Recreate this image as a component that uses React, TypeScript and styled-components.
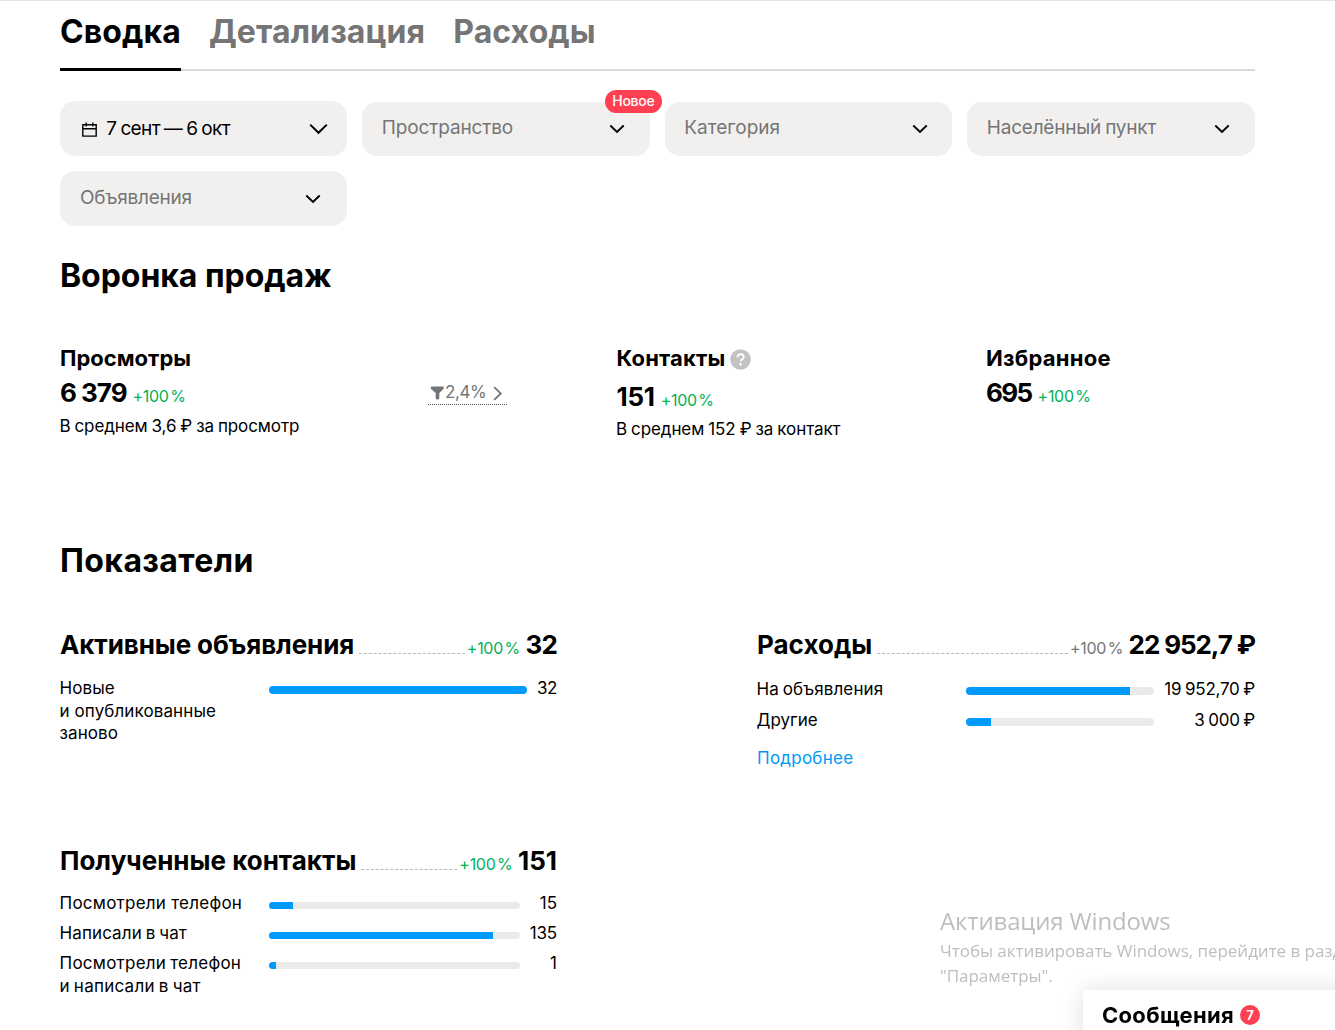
import React from 'react';
import styled, { createGlobalStyle, css } from 'styled-components';

const GlobalStyle = createGlobalStyle`
  * { box-sizing: border-box; }
  body {
    margin: 0;
    background: #fff;
    color: #000;
    font-family: "Inter", "Liberation Sans", sans-serif;
    overflow: hidden;
  }
  h1, h2, h3, p { margin: 0; }
`;

type Tracking = { $track?: number; $words?: number };
const tracking = css<Tracking>`
  letter-spacing: ${p => p.$track ?? 0}px;
  word-spacing: ${p => p.$words ?? 0}px;
`;

const Page = styled.main`
  height: 1030px;
  padding: 0 80px 0 60px;
  border-top: 1px solid #e4e4e4;
  overflow: hidden;
  white-space: nowrap;
`;

const Tabs = styled.nav`
  display: flex;
  gap: 28px;
  height: 70px;
  background: linear-gradient(#dadada, #dadada) bottom / 100% 2px no-repeat;
`;

const Tab = styled.a<{ $active?: boolean }>`
  height: 70px;
  font-size: 32px;
  font-weight: 700;
  line-height: 62px;
  letter-spacing: 0.1px;
  color: ${p => (p.$active ? '#000' : '#757575')};
  border-bottom: ${p => (p.$active ? '3px solid #000' : 'none')};
`;

const Filters = styled.div`
  display: grid;
  grid-template-columns: repeat(4, 1fr);
  gap: 15px;
  margin: 30px 0.2px 0 -0.2px;
`;

const Filter = styled.button<{ $left?: number; $right?: number; $nudge?: number }>`
  position: relative;
  display: flex;
  align-items: center;
  justify-content: space-between;
  height: ${p => 55 - (p.$nudge ?? 0)}px;
  margin: ${p => p.$nudge ?? 0}px 0 0;
  padding: 0 ${p => p.$right ?? 24.5}px 0 ${p => p.$left ?? 19.5}px;
  border: 0;
  border-radius: 15px;
  background: #f2f0ef;
  font-family: inherit;
`;

const FilterLabel = styled.span<Tracking>`
  display: flex;
  align-items: center;
  padding-bottom: 2px;
  font-size: 19px;
  line-height: 24px;
  color: #757575;
  ${tracking}
`;

const DateLabel = styled(FilterLabel)`
  gap: 9px;
  padding: 1px 0 0 3px;
  color: #000;
`;

const NewBadge = styled.span`
  position: absolute;
  top: -12px;
  right: -12px;
  width: 57px;
  height: 23px;
  border-radius: 12px;
  background: #ff4053;
  color: #fff;
  font-size: 14px;
  font-weight: 500;
  line-height: 22px;
  letter-spacing: -0.3px;
  text-align: center;
`;

const SectionTitle = styled.h1<Tracking>`
  font-size: 32px;
  font-weight: 700;
  line-height: 41px;
  ${tracking}
`;

const Section = styled.section<{ $height?: number }>`
  margin-top: 29px;
  height: ${p => (p.$height ? p.$height + 'px' : 'auto')};
  & + & { margin-top: 0; }
`;

const Funnel = styled.div`
  display: grid;
  grid-template-columns: 368px 188.5px 369.5px 1fr;
  margin-top: 47px;
`;

const MetricTitle = styled.h2<Tracking>`
  display: flex;
  align-items: center;
  gap: 5px;
  font-size: 22px;
  font-weight: 700;
  line-height: 30px;
  ${tracking}
`;

const MetricValue = styled.p<{ $drop?: number }>`
  display: flex;
  align-items: baseline;
  gap: 6px;
  margin-top: ${p => 3 + (p.$drop ?? 0)}px;
  line-height: 34px;
`;

const Figure = styled.strong<Tracking>`
  font-size: 26px;
  font-weight: 700;
  ${tracking}
`;

const Delta = styled.span<{ $muted?: boolean }>`
  font-size: 16px;
  letter-spacing: -0.3px;
  word-spacing: -2.6px;
  color: ${p => (p.$muted ? '#757575' : '#02b157')};
`;

const MetricNote = styled.p<Tracking & { $top: number }>`
  margin-top: ${p => p.$top}px;
  margin-left: -0.5px;
  font-size: 17px;
  line-height: 24px;
  ${tracking}
`;

const Conversion = styled.a`
  display: flex;
  align-items: center;
  gap: 1px;
  width: 79px;
  height: 25px;
  margin-top: 37px;
  padding: 0 4px 0 2px;
  border-bottom: 1px dotted #555;
  color: #757575;
  font-size: 17px;
  letter-spacing: -0.4px;
  line-height: 24px;
  svg:first-child { margin-top: 2px; }
  svg:last-child { margin: 2px 0 0 auto; }
`;

const Indicators = styled.div`
  display: grid;
  grid-template-columns: 497px 498px;
  justify-content: space-between;
  row-gap: 74px;
  margin-top: 47px;
`;

const CardHead = styled.div`
  display: flex;
  align-items: baseline;
  line-height: 34px;
`;

const CardTitle = styled.h2<Tracking>`
  font-size: 26px;
  font-weight: 700;
  ${tracking}
`;

const Leader = styled.span`
  flex: 1;
  margin: 0 2px 0 5px;
  border-bottom: 1px dashed #b8b8b8;
`;

const Total = styled(Figure)`
  margin-left: 5.5px;
`;

const Rows = styled.div<{ $top: number; $gap: number }>`
  display: flex;
  flex-direction: column;
  gap: ${p => p.$gap}px;
  margin-top: ${p => p.$top}px;
`;

const Row = styled.div`
  display: flex;
  align-items: flex-start;
  font-size: 17px;
  line-height: 22.5px;
`;

const RowLabel = styled.span<Tracking>`
  flex: 0 0 209.5px;
  margin-left: -0.5px;
  white-space: pre-line;
  ${tracking}
`;

const Track = styled.div<{ $thin?: boolean }>`
  flex: 1;
  height: ${p => (p.$thin ? 7 : 8)}px;
  margin-top: ${p => (p.$thin ? 10 : 9)}px;
  border-radius: 4px;
  background: #ebeae9;
  overflow: hidden;
`;

const Fill = styled.div`
  height: 100%;
  background: #0099fc;
`;

const RowValue = styled.span<Tracking & { $width: number }>`
  width: ${p => p.$width}px;
  margin-left: 10px;
  display: flex;
  justify-content: flex-end;
  white-space: pre;
  ${tracking}
`;

const More = styled.a`
  display: block;
  margin-top: 15px;
  font-size: 17px;
  line-height: 24px;
  letter-spacing: 0.25px;
  color: #0099f7;
`;

const Watermark = styled.aside`
  position: fixed;
  left: 940px;
  top: 904px;
  color: #bebebe;
  font-family: "Open Sans", "Noto Sans", sans-serif;
  font-size: 17px;
  line-height: 25px;
  letter-spacing: -0.04px;
  white-space: nowrap;
`;

const WatermarkTitle = styled.p`
  margin-bottom: 1px;
  font-size: 24px;
  line-height: 33px;
  letter-spacing: -0.15px;
`;

const Messages = styled.aside`
  position: fixed;
  left: 1083px;
  top: 990px;
  display: flex;
  align-items: center;
  gap: 6px;
  width: 320px;
  height: 50px;
  padding-left: 19px;
  border-radius: 4px 0 0 0;
  background: #fff;
  box-shadow: 0 0 24px rgba(0, 0, 0, 0.13);
  font-size: 22px;
  font-weight: 700;
  letter-spacing: 0.3px;
`;

const Count = styled.span`
  width: 20px;
  height: 20px;
  border-radius: 50%;
  background: #ff4053;
  color: #fff;
  font-size: 13px;
  line-height: 20px;
  letter-spacing: 0;
  text-align: center;
`;

const Chevron = ({ large }: { large?: boolean }) =>
  large ? (
    <svg width="19" height="12" viewBox="0 0 19 12" fill="none" stroke="#000" strokeWidth="2">
      <path d="M1.2 1.6 9.5 9.8l8.3-8.2" />
    </svg>
  ) : (
    <svg width="16" height="10" viewBox="0 0 16 10" fill="none" stroke="#000" strokeWidth="1.9">
      <path d="M1.3 1.5 8 8l6.7-6.5" />
    </svg>
  );

const CalendarIcon = () => (
  <svg width="15" height="15" viewBox="0 0 15 15" fill="none" stroke="#000" strokeWidth="1.4">
    <path d="M.8 2.7h13.4v11.4H.8zM.8 6.7h13.4M4.2.6v3.8M10.8.6v3.8" />
  </svg>
);

const FunnelIcon = () => (
  <svg width="14" height="14" viewBox="0 0 14 14" fill="#757575">
    <path d="M1.3.5h11.9q.5 0 .5.6v1.6L9.3 6.9v5.4l-1 1.1H6.6l-.9-1V6.9L.8 2.7V1.1q0-.6.5-.6z" />
  </svg>
);

const ArrowIcon = () => (
  <svg width="10" height="15" viewBox="0 0 10 15" fill="none" stroke="#757575" strokeWidth="1.8">
    <path d="M1.2 1.2 7.8 7.5l-6.6 6.3" />
  </svg>
);

const HelpMark = styled.svg`
  margin-top: 3px;
`;

const HelpIcon = () => (
  <HelpMark width="21" height="21" viewBox="0 0 21 21">
    <circle cx="10.5" cy="10.5" r="10.3" fill="#c2c2c2" />
    <path
      d="M7.5 8.2c0-1.9 1.3-3 3.1-3s3.1 1.1 3.1 2.7c0 2.3-3 2.2-3 4.7"
      fill="none"
      stroke="#fff"
      strokeWidth="1.9"
    />
    <circle cx="10.6" cy="15.3" r="1.3" fill="#fff" />
  </HelpMark>
);

type BarRow = {
  label: string;
  share: number;
  value: string;
  track?: number;
  words?: number;
  valueTrack?: number;
};

const activeRows: BarRow[] = [
  { label: 'Новые\nи опубликованные\nзаново', share: 100, value: '32', track: 0.1, valueTrack: -0.4 },
];
const expenseRows: BarRow[] = [
  { label: 'На объявления', share: 87.3, value: '19 952,70 ₽', track: 0.1, words: -1, valueTrack: -0.25 },
  { label: 'Другие', share: 13.3, value: '3 000 ₽', valueTrack: -0.3 },
];
const contactRows: BarRow[] = [
  { label: 'Посмотрели телефон', share: 9.6, value: '15', track: 0.25 },
  { label: 'Написали в чат', share: 89.2, value: '135', track: 0.1, words: -1, valueTrack: -0.2 },
  { label: 'Посмотрели телефон\nи написали в чат', share: 2.8, value: '1', track: 0.25, words: -1 },
];

type CardProps = {
  title: string;
  total: string;
  rows: BarRow[];
  valueWidth: number;
  top: number;
  gap?: number;
  muted?: boolean;
  thin?: boolean;
  titleTrack?: number;
  totalTrack?: number;
  children?: React.ReactNode;
};

const Card = ({
  title, total, rows, valueWidth, top, gap = 8, muted, thin, titleTrack, totalTrack, children,
}: CardProps) => (
  <article>
    <CardHead>
      <CardTitle $track={titleTrack}>{title}</CardTitle>
      <Leader />
      <Delta $muted={muted}>+100 %</Delta>
      <Total $track={totalTrack}>{total}</Total>
    </CardHead>
    <Rows $top={top} $gap={gap}>
      {rows.map((row, i) => (
        <Row key={i}>
          <RowLabel $track={row.track} $words={row.words}>{row.label}</RowLabel>
          <Track $thin={thin}>
            <Fill style={{ width: `${row.share}%` }} />
          </Track>
          <RowValue $width={valueWidth} $track={row.valueTrack} $words={-0.7}>{row.value}</RowValue>
        </Row>
      ))}
    </Rows>
    {children}
  </article>
);

export default function App() {
  return (
    <>
      <GlobalStyle />
      <Page>
        <Tabs>
          <Tab $active>Сводка</Tab>
          <Tab>Детализация</Tab>
          <Tab>Расходы</Tab>
        </Tabs>

        <Filters>
          <Filter $right={19.5}>
            <DateLabel $track={-0.65} $words={-0.7}>
              <CalendarIcon />
              7 сент — 6 окт
            </DateLabel>
            <Chevron large />
          </Filter>
          <Filter $nudge={1}>
            <FilterLabel $track={-0.15}>Пространство</FilterLabel>
            <Chevron />
            <NewBadge>Новое</NewBadge>
          </Filter>
          <Filter $nudge={1}>
            <FilterLabel>Категория</FilterLabel>
            <Chevron />
          </Filter>
          <Filter $nudge={1}>
            <FilterLabel $track={-0.22} $words={-1}>Населённый пункт</FilterLabel>
            <Chevron />
          </Filter>
          <Filter $left={20.2} $right={26.3}>
            <FilterLabel $track={-0.25}>Объявления</FilterLabel>
            <Chevron />
          </Filter>
        </Filters>

        <Section $height={285}>
          <SectionTitle $track={-0.05}>Воронка продаж</SectionTitle>
          <Funnel>
            <div>
              <MetricTitle>Просмотры</MetricTitle>
              <MetricValue>
                <Figure $track={-1} $words={0}>6 379</Figure>
                <Delta>+100 %</Delta>
              </MetricValue>
              <MetricNote $top={1} $track={-0.1} $words={-0.7}>В среднем 3,6 ₽ за просмотр</MetricNote>
            </div>
            <Conversion>
              <FunnelIcon />
              2,4%
              <ArrowIcon />
            </Conversion>
            <div>
              <MetricTitle $track={0.12}>
                Контакты
                <HelpIcon />
              </MetricTitle>
              <MetricValue $drop={4}>
                <Figure $track={-0.3}>151</Figure>
                <Delta>+100 %</Delta>
              </MetricValue>
              <MetricNote $top={0} $track={-0.1} $words={-0.6}>В среднем 152 ₽ за контакт</MetricNote>
            </div>
            <div>
              <MetricTitle $track={0.28}>Избранное</MetricTitle>
              <MetricValue>
                <Figure $track={-1.6}>695</Figure>
                <Delta>+100 %</Delta>
              </MetricValue>
            </div>
          </Funnel>
        </Section>

        <Section>
          <SectionTitle $track={0.4}>Показатели</SectionTitle>
          <Indicators>
            <Card
              title="Активные объявления"
              total="32"
              titleTrack={-0.1}
              totalTrack={-0.8}
              rows={activeRows}
              valueWidth={20}
              top={12}
            />
            <Card
              title="Расходы"
              total="22 952,7 ₽"
              totalTrack={-1.1}
              rows={expenseRows}
              valueWidth={91}
              top={13}
              muted
            >
              <More>Подробнее</More>
            </Card>
            <Card
              title="Полученные контакты"
              total="151"
              rows={contactRows}
              valueWidth={27}
              top={11}
              gap={7.5}
              thin
            />
          </Indicators>
        </Section>
      </Page>

      <Watermark>
        <WatermarkTitle>Активация Windows</WatermarkTitle>
        <p>Чтобы активировать Windows, перейдите в раздел</p>
        <p>"Параметры".</p>
      </Watermark>

      <Messages>
        Сообщения
        <Count>7</Count>
      </Messages>
    </>
  );
}
